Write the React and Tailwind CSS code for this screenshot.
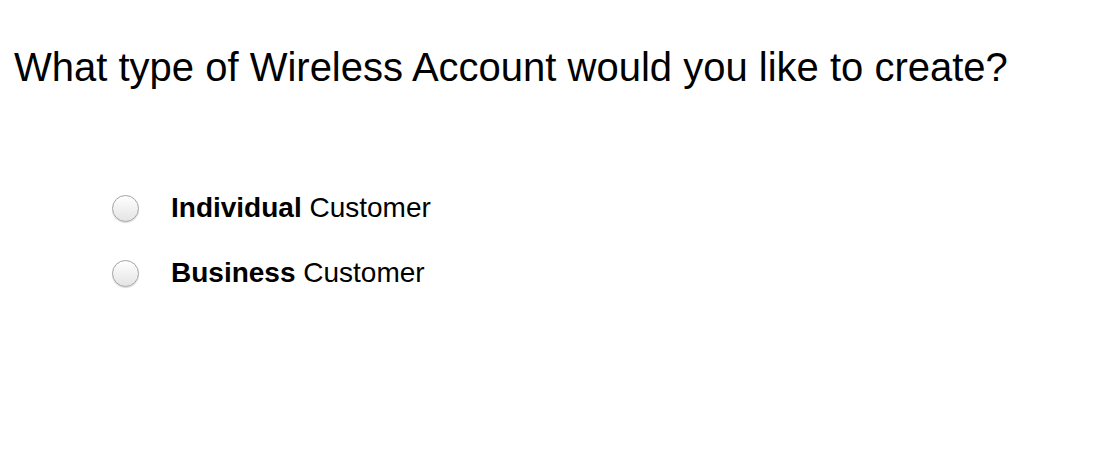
export default function App() {
  const options = [
    { bold: "Individual", rest: " Customer" },
    { bold: "Business", rest: " Customer" },
  ];
  return (
    <div
      className="w-[1098px] h-[452px] bg-white text-black flex flex-col"
      style={{ fontFamily: '"Liberation Sans", Arial, sans-serif' }}
    >
      <h1 className="mt-[47px] ml-[14px] text-[40px] leading-[40px] font-normal">
        What type of Wireless Account would you like to create?
      </h1>
      <div className="mt-[107px] ml-[112px] flex flex-col gap-[37px]">
        {options.map((o) => (
          <label key={o.bold} className="flex items-center h-[28px] gap-[32px]">
            <span className="w-[27px] h-[27px] rounded-full border border-[#a3a3a3] bg-gradient-to-b from-[#ffffff] to-[#e4e4e4] shadow-[0_1px_1px_rgba(0,0,0,0.15)] shrink-0" />
            <span className="text-[28px] leading-[28px]">
              <b className="font-bold">{o.bold}</b>
              {o.rest}
            </span>
          </label>
        ))}
      </div>
    </div>
  );
}
